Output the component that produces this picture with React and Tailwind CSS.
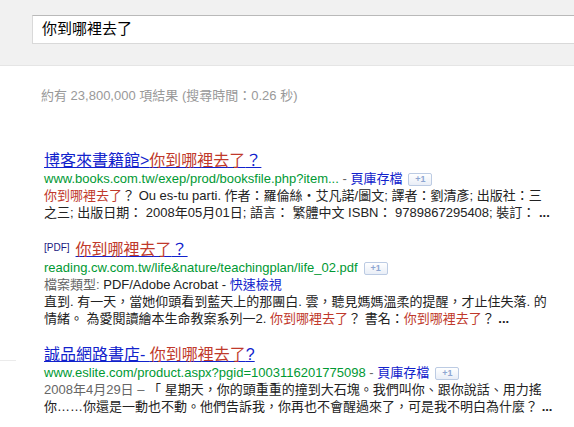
import React from "react";

const font = { fontFamily: '"Liberation Sans", Arial, "Noto Sans CJK TC", sans-serif' };

function PlusOne() {
  return (
    <span className="inline-flex items-center justify-center ml-[6px] w-[24px] h-[13px] border border-[#bccbe3] rounded-[2px] bg-gradient-to-b from-white to-[#e9eef7] text-[9px] font-bold leading-none text-[#8ea6d2] align-middle">
      +1
    </span>
  );
}

const Em = ({ children }) => <span className="text-[#c0392b]">{children}</span>;

function App() {
  return (
    <div className="w-[574px] h-[427px] overflow-hidden bg-white text-[#222]" style={font}>
      <div className="h-[66px] bg-[#f1f1f1] border-b border-[#e5e5e5] pt-[15px] pl-[32px]">
        <div className="w-[600px] h-[29px] bg-white border border-[#d9d9d9] border-t-[#b9b9b9] flex items-center pl-[9px] text-[15px] text-black">
          你到哪裡去了
        </div>
      </div>

      <div className="pl-[41px] pt-[21px] text-[13px] leading-[17px] text-[#999]">
        約有 23,800,000 項結果 (搜尋時間：0.26 秒)
      </div>

      <div className="pl-[44px] pt-[48px] flex flex-col">
        <div className="flex flex-col">
          <a className="text-[16px] leading-[18px] text-[#1122cc] underline whitespace-nowrap">
            博客來書籍館&gt;<Em>你到哪裡去了</Em>？
          </a>
          <div className="text-[13px] leading-[17px] whitespace-nowrap">
            <span className="text-[#009933]">www.books.com.tw/exep/prod/booksfile.php?item...</span>
            <span className="text-[#666]"> - </span>
            <span className="text-[#1122cc]">頁庫存檔</span>
            <PlusOne />
          </div>
          <div className="text-[13px] leading-[17px] whitespace-nowrap">
            <Em>你到哪裡去了</Em>？ Ou es-tu parti. 作者：羅倫絲・艾凡諾/圖文; 譯者：劉清彥; 出版社：三
            <br />
            之三; 出版日期： 2008年05月01日; 語言： 繁體中文 ISBN： 9789867295408; 裝訂： <b>...</b>
          </div>
        </div>

        <div className="flex flex-col mt-[20px]">
          <div className="flex items-end whitespace-nowrap">
            <span className="text-[10px] leading-[14px] text-[#1a1a80] mr-[6px] mb-[4px]">[PDF]</span>
            <a className="text-[16px] leading-[18px] text-[#1122cc] underline">
              <Em>你到哪裡去了</Em>？
            </a>
          </div>
          <div className="text-[13px] leading-[17px] whitespace-nowrap">
            <span className="text-[#009933]">reading.cw.com.tw/life&amp;nature/teachingplan/life_02.pdf</span>
            <PlusOne />
          </div>
          <div className="text-[13px] leading-[17px] whitespace-nowrap">
            <span className="text-[#666]">檔案類型: </span>PDF/Adobe Acrobat - <span className="text-[#1122cc]">快速檢視</span>
            <br />
            直到. 有一天，當她仰頭看到藍天上的那團白. 雲，聽見媽媽溫柔的提醒，才止住失落. 的
            <br />
            情緒。 為愛閱讀繪本生命教案系列一2. <Em>你到哪裡去了</Em>？ 書名：<Em>你到哪裡去了</Em>？ <b>...</b>
          </div>
        </div>

        <div className="relative flex flex-col mt-[19px]">
          <div className="absolute left-[-44px] top-[14px] w-[16px] h-px bg-[#ebebeb]" />
          <a className="text-[16px] leading-[18px] text-[#1122cc] underline whitespace-nowrap">
            誠品網路書店- <Em>你到哪裡去了</Em>?
          </a>
          <div className="text-[13px] leading-[17px] whitespace-nowrap">
            <span className="text-[#009933]">www.eslite.com/product.aspx?pgid=1003116201775098</span>
            <span className="text-[#666]"> - </span>
            <span className="text-[#1122cc]">頁庫存檔</span>
            <PlusOne />
          </div>
          <div className="text-[13px] leading-[17px] whitespace-nowrap">
            <span className="text-[#666]">2008年4月29日 – </span>「 星期天，你的頭重重的撞到大石塊。我們叫你、跟你說話、用力搖
            <br />
            你……你還是一動也不動。他們告訴我，你再也不會醒過來了，可是我不明白為什麼？ <b>...</b>
          </div>
        </div>
      </div>
    </div>
  );
}

export default App;
